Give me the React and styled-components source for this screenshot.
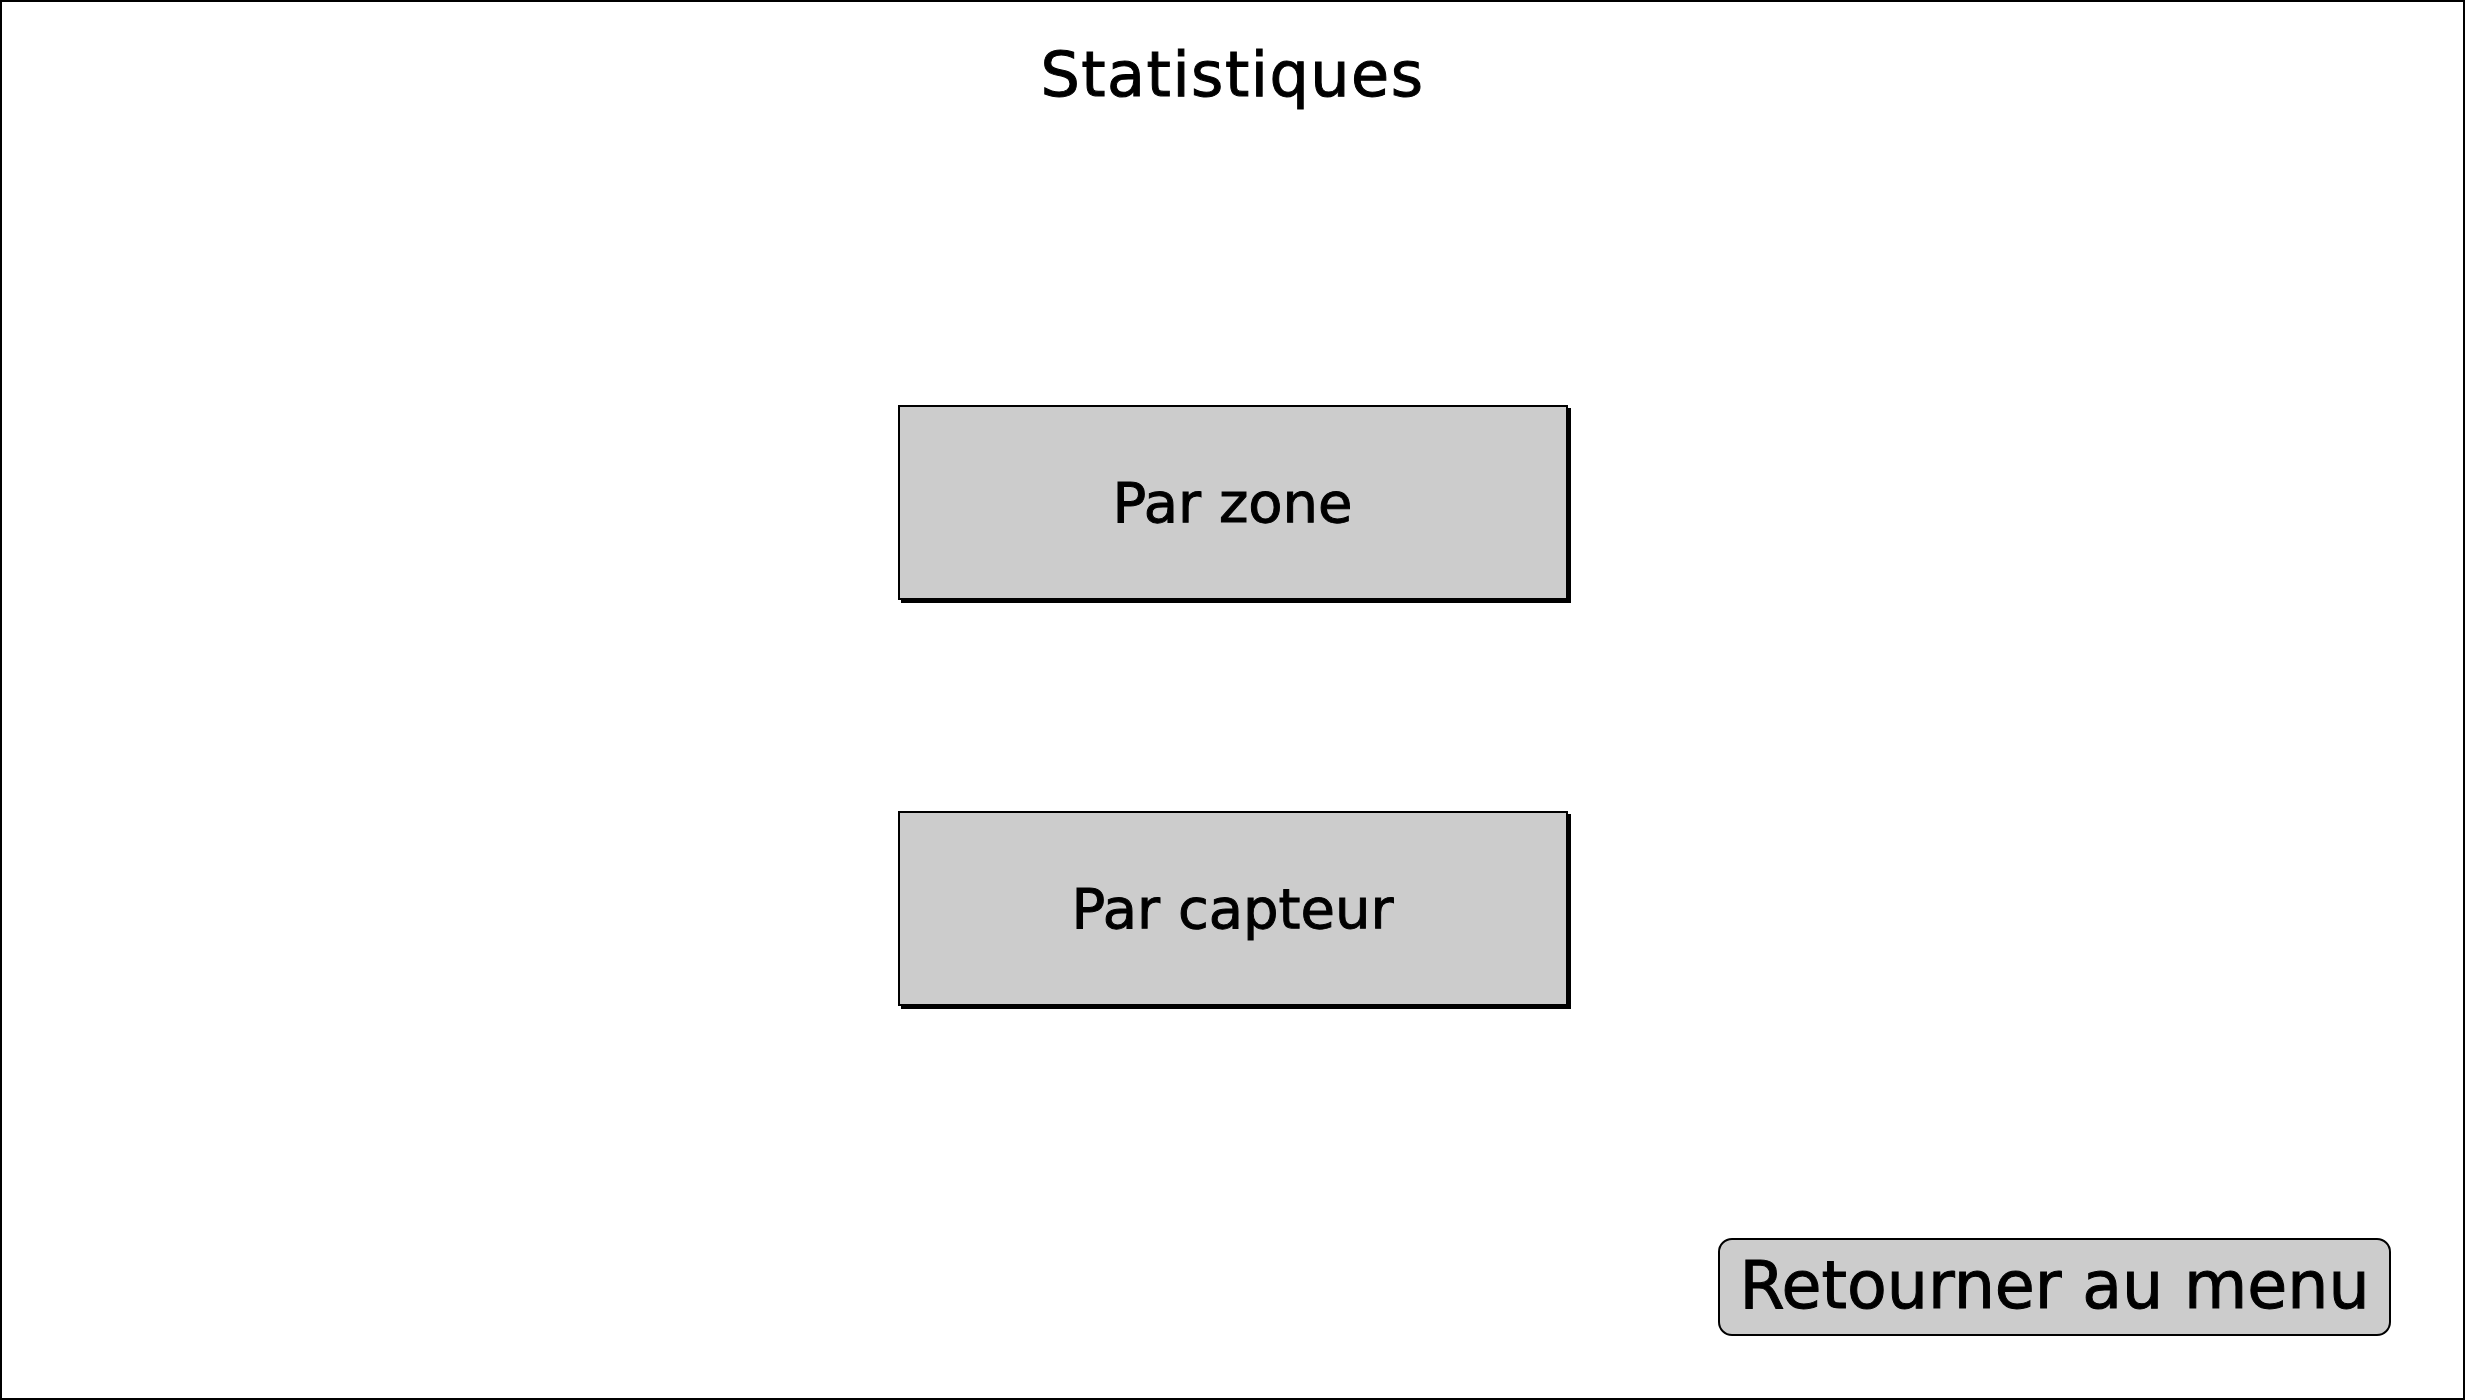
import React from 'react'
import styled, { createGlobalStyle } from 'styled-components'

const GlobalStyle = createGlobalStyle`
  html, body {
    margin: 0;
    padding: 0;
    background: #fff;
  }

  body {
    font-family: "DejaVu Sans", "Liberation Sans", sans-serif;
    color: #000;
  }
`

const Frame = styled.div`
  box-sizing: border-box;
  width: 100vw;
  height: 1400px;
  border: 2px solid #000;
  display: flex;
  flex-direction: column;
  align-items: center;
`

const Title = styled.h1`
  margin: 0;
  padding-top: 37px;
  font-size: 62px;
  font-weight: normal;
  line-height: 72px;
  letter-spacing: 1.5px;
  -webkit-text-stroke: 1px #000;
`

const Menu = styled.div`
  margin-top: 294px;
  display: flex;
  flex-direction: column;
  gap: 211px;
`

const MenuButton = styled.button`
  box-sizing: border-box;
  width: 670px;
  height: 195px;
  display: flex;
  align-items: center;
  justify-content: center;
  background: #cccccc;
  border: 2px solid #000;
  border-radius: 0;
  box-shadow: 3px 3px 0 #000;
  font-family: inherit;
  font-size: 56px;
  color: #000;
  -webkit-text-stroke: 1px #000;
  padding: 0;
  cursor: pointer;
`

const Footer = styled.div`
  align-self: stretch;
  margin-top: 232px;
  display: flex;
  justify-content: flex-end;
  padding-right: 72px;
`

const BackButton = styled.button`
  box-sizing: border-box;
  width: 673px;
  height: 98px;
  display: flex;
  align-items: center;
  justify-content: center;
  background: #cccccc;
  border: 2px solid #000;
  border-radius: 14px;
  font-family: inherit;
  font-size: 65px;
  color: #000;
  -webkit-text-stroke: 1px #000;
  padding: 0 0 4px;
  cursor: pointer;
`

export default function App() {
  return (
    <>
      <GlobalStyle />
      <Frame>
        <Title>Statistiques</Title>
        <Menu>
          <MenuButton>Par zone</MenuButton>
          <MenuButton>Par capteur</MenuButton>
        </Menu>
        <Footer>
          <BackButton>Retourner au menu</BackButton>
        </Footer>
      </Frame>
    </>
  )
}
